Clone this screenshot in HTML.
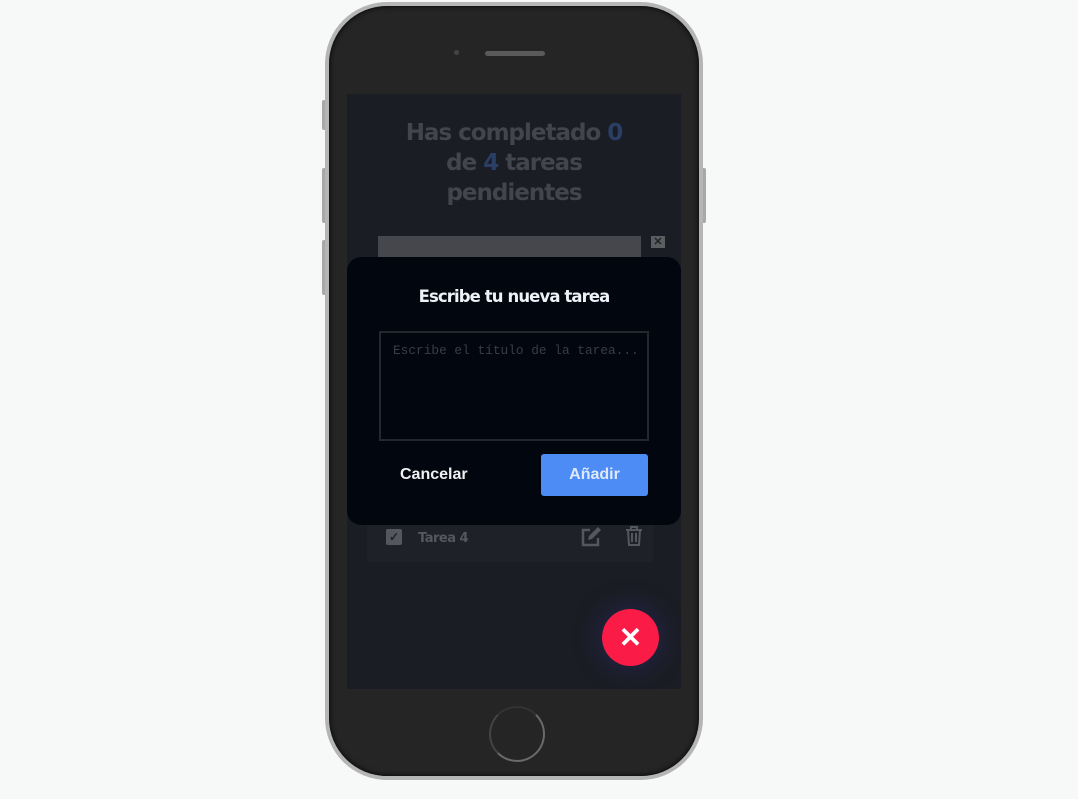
<!DOCTYPE html>
<html><head><meta charset="utf-8"><style>
*{margin:0;padding:0;box-sizing:border-box}
body{width:1078px;height:799px;background:#f7f9f8;position:relative;overflow:hidden;font-family:"Liberation Sans",sans-serif}
.btn{position:absolute;background:#a8a8a8;border-radius:2px}
.phone{position:absolute;left:325px;top:2px;width:378px;height:778px;border-radius:62px;background:#b5b5b5;padding:4px}
.body{width:100%;height:100%;border-radius:58px;background:#252525;position:relative;box-shadow:inset 0 0 6px #000}
.screen{position:absolute;left:18px;top:88px;width:334px;height:595px;background:#1b1d25;overflow:hidden}
.title{position:absolute;left:0;width:334px;top:24px;text-align:center;font-family:"DejaVu Sans",sans-serif;font-weight:bold;font-size:23px;line-height:30px;color:#42454d;letter-spacing:-1px}
.title b{color:#2b3f66}
.modal{position:absolute;left:347px;top:257px;width:334px;height:268px;background:#02060f;border-radius:14px}
</style></head><body>
<div class="btn" style="left:322px;top:100px;width:4px;height:30px"></div>
<div class="btn" style="left:322px;top:168px;width:4px;height:55px"></div>
<div class="btn" style="left:322px;top:240px;width:4px;height:55px"></div>
<div class="btn" style="left:702px;top:168px;width:4px;height:55px"></div>
<div class="phone"><div class="body">
 <div style="position:absolute;left:125px;top:44px;width:5px;height:5px;border-radius:50%;background:#444"></div>
 <div style="position:absolute;left:156px;top:45px;width:60px;height:5px;border-radius:3px;background:#5a5a5a"></div>
 <div class="screen">
  <div class="title">Has completado <b>0</b><br>de <b>4</b> tareas<br>pendientes</div>
  <div style="position:absolute;left:31px;top:142px;width:263px;height:24px;background:#45474d"></div>
  <div style="position:absolute;left:304px;top:142px;width:14px;height:12px;background:#5b5d62;color:#222;font-size:11px;text-align:center;line-height:12px;font-weight:bold">✕</div>
  <div style="position:absolute;left:20px;top:425px;width:286px;height:43px;background:#1f2128"></div>
  <div style="position:absolute;left:39px;top:435px;width:16px;height:16px;background:#55575e;border-radius:2px;color:#1f2128;font-size:12px;text-align:center;line-height:16px;font-weight:bold">✓</div>
  <div style="position:absolute;left:71px;top:437px;font-family:'DejaVu Sans',sans-serif;font-weight:bold;font-size:13px;color:#55575e;letter-spacing:-0.5px">Tarea 4</div>
  <svg style="position:absolute;left:233px;top:432px" width="22" height="22" viewBox="0 0 22 22"><path d="M10 4H3v15h15v-7" fill="none" stroke="#55575e" stroke-width="2.5"/><path d="M8 14l1-4 9-9 3 3-9 9z" fill="#55575e"/></svg>
  <svg style="position:absolute;left:278px;top:432px" width="18" height="20" viewBox="0 0 18 20"><path d="M1 4h16M6 4V1h6v3M3 4l1 15h10l1-15M7 7v9M11 7v9" fill="none" stroke="#55575e" stroke-width="2"/></svg>
  <div style="position:absolute;left:255px;top:515px;width:57px;height:57px;border-radius:50%;background:#fb1b47;box-shadow:0 0 20px 6px rgba(40,40,90,.5);color:#fff;font-size:28px;font-weight:bold;text-align:center;line-height:57px">✕</div>
 </div>
 <div style="position:absolute;left:160px;top:700px;width:56px;height:56px;border-radius:50%;border:2px solid #6a6a6a;border-top-color:#333;border-left-color:#444"></div>
</div></div>
<div class="modal">
 <div style="position:absolute;top:30px;width:334px;text-align:center;font-family:'DejaVu Sans',sans-serif;font-weight:bold;font-size:16.5px;color:#eef1f6;letter-spacing:-0.9px">Escribe tu nueva tarea</div>
 <div style="position:absolute;left:32px;top:74px;width:270px;height:110px;border:2px solid #24272d;background:#02060f;font-family:'Liberation Mono',monospace;font-size:12.8px;color:#3a3d44;padding:10px 12px;white-space:nowrap;overflow:hidden">Escribe el título de la tarea...</div>
 <div style="position:absolute;left:53px;top:209px;font-weight:bold;font-size:16px;color:#f0f0f0">Cancelar</div>
 <div style="position:absolute;left:194px;top:197px;width:107px;height:42px;background:#4d8cf4;border-radius:3px;color:#dfe9fb;font-weight:bold;font-size:16px;text-align:center;line-height:42px">Añadir</div>
</div>
</body></html>
